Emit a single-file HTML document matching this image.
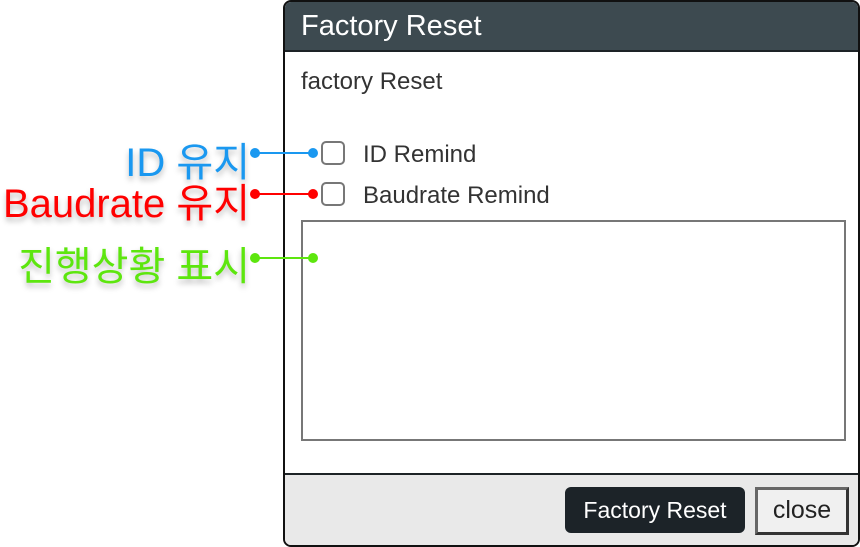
<!DOCTYPE html>
<html><head><meta charset="utf-8"><style>
body{margin:0;width:860px;height:546px;background:#fff;position:relative;overflow:hidden;font-family:"Liberation Sans","Noto Sans CJK KR",sans-serif}
.dlg{position:absolute;left:283px;top:0;width:573px;height:543px;border:2px solid #111;border-radius:8px;overflow:hidden;background:#fff}
.hd{height:48px;background:#3d4a50;border-bottom:2px solid #1d2326;color:#fff;font-size:29px;line-height:48px;padding-left:16px}
.t{position:absolute;color:#333;font-size:24px}
.cb{position:absolute;left:36px;width:24px;height:24px;border:2px solid #777;border-radius:5px;box-sizing:border-box}
.ta{position:absolute;left:16px;top:218px;width:545px;height:221px;border:2px solid #777;box-sizing:border-box}
.ft{position:absolute;left:0;top:471px;width:100%;height:72px;background:#e9e9e9;border-top:2px solid #1d2326}
.b1{position:absolute;left:280px;top:12px;width:180px;height:46px;background:#1c2328;border-radius:6px;color:#fff;font-size:23px;line-height:46px;text-align:center}
.b2{position:absolute;left:470px;top:12px;width:94px;height:48px;border:3px solid #333;border-top-color:#666;border-left-color:#666;box-sizing:border-box;background:#f0f0f0;color:#222;font-size:25px;line-height:40px;text-align:center}
.lb{position:absolute;right:610px;font-size:40px;white-space:nowrap;text-shadow:0 4px 6px rgba(0,0,0,.25)}
.ln{position:absolute;height:2px}
.dot{position:absolute;width:10px;height:10px;border-radius:50%}
</style></head><body>
<div class="dlg">
<div class="hd">Factory Reset</div>
<div class="t" style="left:16px;top:66px">factory Reset</div>
<div class="cb" style="top:139px"></div><div class="t" style="left:78px;top:139px">ID Remind</div>
<div class="cb" style="top:180px"></div><div class="t" style="left:78px;top:180px">Baudrate Remind</div>
<div class="ta"></div>
<div class="ft"><div class="b1">Factory Reset</div><div class="b2">close</div></div>
</div>
<div class="lb" style="top:130px;color:#1a98f0">ID 유지</div>
<div class="lb" style="top:171px;color:#f00">Baudrate 유지</div>
<div class="lb" style="top:234px;color:#5de60e">진행상황 표시</div>
<div class="ln" style="left:255px;width:58px;top:152px;background:#1a98f0"></div>
<div class="dot" style="left:250px;top:148px;background:#1a98f0"></div><div class="dot" style="left:308px;top:148px;background:#1a98f0"></div>
<div class="ln" style="left:255px;width:58px;top:193px;background:#f00"></div>
<div class="dot" style="left:250px;top:189px;background:#f00"></div><div class="dot" style="left:308px;top:189px;background:#f00"></div>
<div class="ln" style="left:255px;width:58px;top:257px;background:#5de60e"></div>
<div class="dot" style="left:250px;top:253px;background:#5de60e"></div><div class="dot" style="left:308px;top:253px;background:#5de60e"></div>
</body></html>
